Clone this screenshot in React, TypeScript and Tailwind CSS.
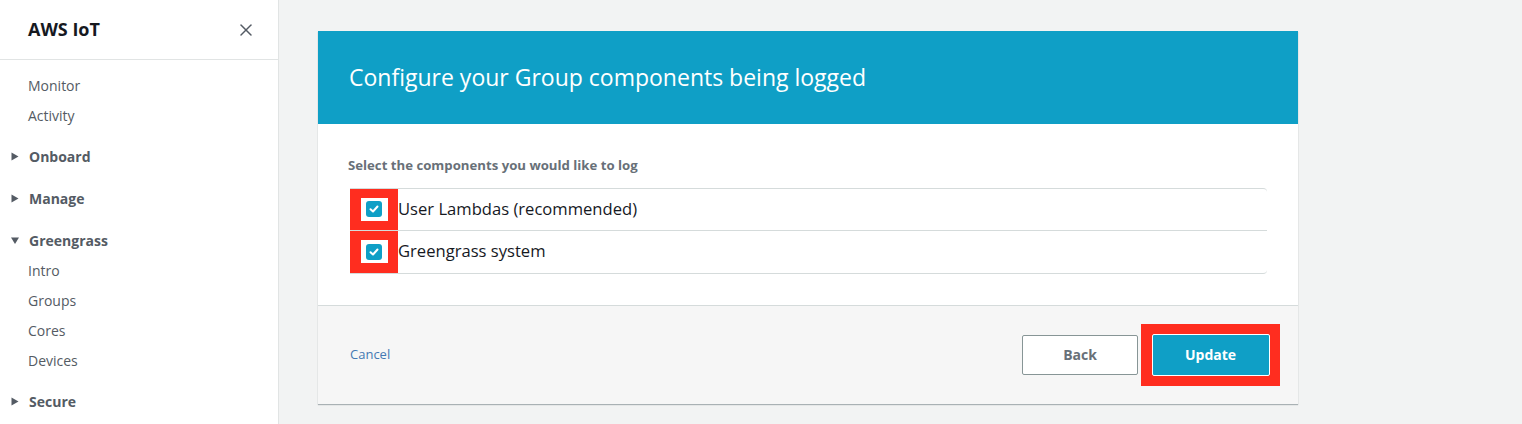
import { X } from 'lucide-react';

const FONT = { fontFamily: '"Open Sans", "Liberation Sans", sans-serif' };

function NavLink({ label }: { label: string }) {
  return <div className="flex h-[30px] items-center pl-[28px] text-[14px] text-[#545b64]">{label}</div>;
}

function NavGroup({ label, open }: { label: string; open?: boolean }) {
  return (
    <div className="flex h-[42px] items-center pl-[11px] text-[14px] font-bold text-[#545b64]">
      <svg width="8" height="9" viewBox="0 0 8 9" className="mr-[10px] fill-[#545b64]">
        {open ? <path d="M0 1.5 H8 L4 8 Z" /> : <path d="M0.5 0.5 L7.5 4.5 L0.5 8.5 Z" />}
      </svg>
      {label}
    </div>
  );
}

function CheckRow({ label, last }: { label: string; last?: boolean }) {
  return (
    <div className={`flex h-[42px] items-center ${last ? '' : 'border-b border-[#d5dbdb]'}`}>
      <div className="flex h-full w-[48px] shrink-0 items-center justify-center bg-[#ff2d1f]">
        <div className="flex h-[23px] w-[27px] items-center justify-center bg-white">
          <div className="flex h-[16px] w-[16px] items-center justify-center rounded-[3px] bg-[#0f9fc6]">
            <svg width="10" height="8" viewBox="0 0 10 8" fill="none">
              <path d="M1.5 4.2 L4 6.5 L8.5 1.5" stroke="white" strokeWidth="2" strokeLinecap="round" strokeLinejoin="round" />
            </svg>
          </div>
        </div>
      </div>
      <span className="text-[16.6px] text-[#16191f]">{label}</span>
    </div>
  );
}

export default function App() {
  return (
    <div className="flex h-[424px] w-[1522px] overflow-hidden bg-[#f2f3f3]" style={FONT}>
      <aside className="w-[279px] shrink-0 border-r border-[#e1e4e4] bg-white">
        <div className="flex h-[60px] items-center justify-between border-b border-[#e1e4e4] pl-[28px] pr-[22px]">
          <span className="text-[18px] font-bold text-[#16191f]">AWS IoT</span>
          <X size={20} strokeWidth={1.8} className="text-[#545b64]" />
        </div>
        <div className="pt-[10px]">
          <NavLink label="Monitor" />
          <NavLink label="Activity" />
          <div className="h-[5px]" />
          <NavGroup label="Onboard" />
          <NavGroup label="Manage" />
          <NavGroup label="Greengrass" open />
          <div className="-mt-[6px]">
            <NavLink label="Intro" />
            <NavLink label="Groups" />
            <NavLink label="Cores" />
            <NavLink label="Devices" />
          </div>
          <div className="h-[5px]" />
          <NavGroup label="Secure" />
        </div>
      </aside>

      <main className="flex-1 pl-[39px] pt-[31px]">
        <div className="w-[980px] bg-white shadow-[0_1px_1px_rgba(0,28,36,0.3)]">
          <div className="flex h-[93px] items-center bg-[#0f9fc6] px-[31px]">
            <h1 className="text-[23px] text-white">Configure your Group components being logged</h1>
          </div>
          <div className="px-[30px] pb-[31px] pt-[32px]">
            <p className="mb-[12px] text-[13.2px] font-bold text-[#687078]">Select the components you would like to log</p>
            <div className="ml-[2px] w-[917px] rounded-r-[4px] border-y border-[#d5dbdb]">
              <CheckRow label="User Lambdas (recommended)" />
              <CheckRow label="Greengrass system" last />
            </div>
          </div>
          <div className="flex h-[99px] items-center justify-between border-t border-[#d5dbdb] bg-[#f6f6f6] pl-[32px] pr-[18px]">
            <a className="text-[13px] text-[#4479b3]">Cancel</a>
            <div className="flex items-center">
              <button className="h-[40px] w-[116px] rounded-[2px] border border-[#879596] bg-white text-[14px] font-bold text-[#687078]">
                Back
              </button>
              <div className="ml-[3px] flex h-[62px] w-[139px] items-center justify-center bg-[#ff2d1f]">
                <button className="h-[42px] w-[118px] rounded-[2px] border border-white bg-[#0f9fc6] text-[14px] font-bold text-white">
                  Update
                </button>
              </div>
            </div>
          </div>
        </div>
      </main>
    </div>
  );
}
